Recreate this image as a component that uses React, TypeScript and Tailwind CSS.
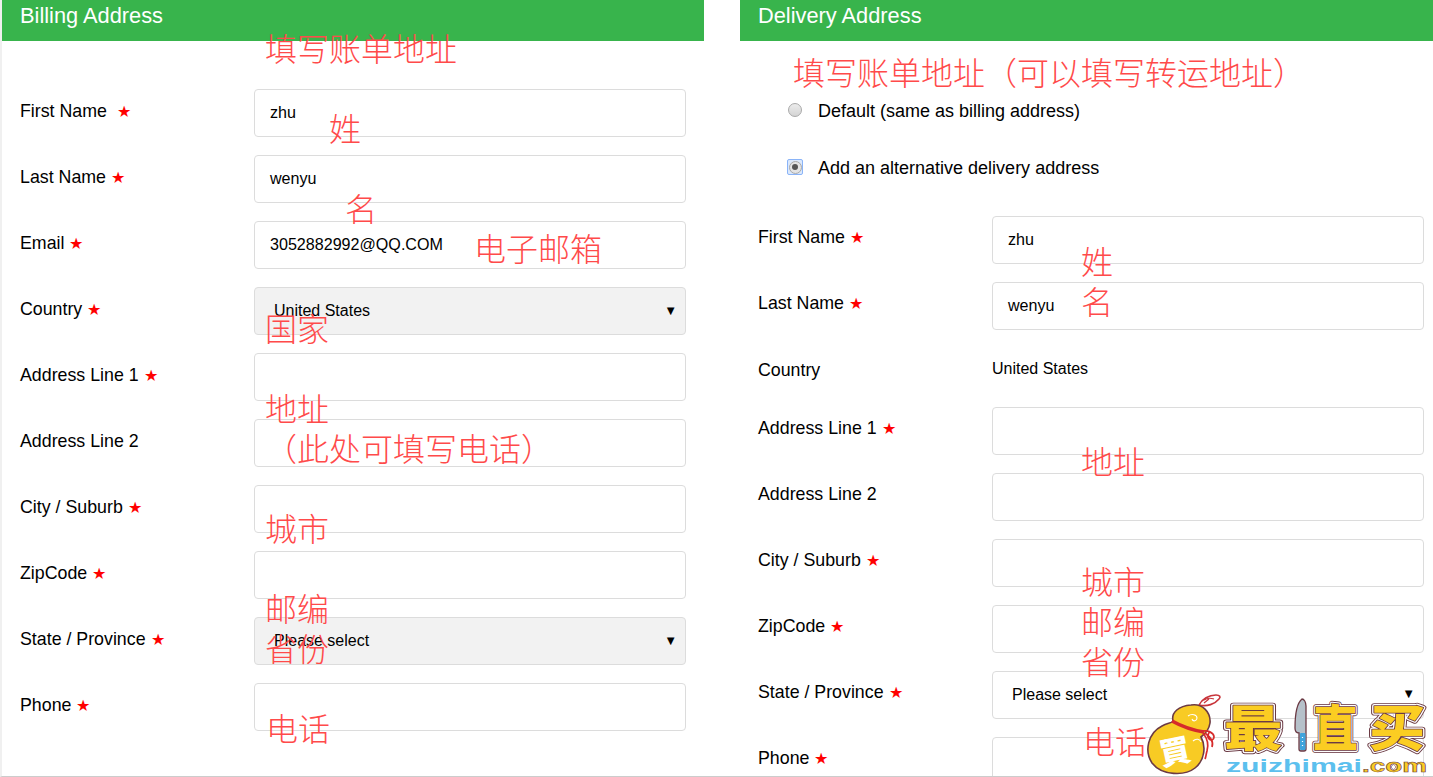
const sans = "font-['Liberation_Sans',Arial,sans-serif]";

function Star({ wide }: { wide?: boolean }) {
  return <span className={`${wide ? "ml-[10px]" : "ml-[5px]"} text-[16px] text-[#ff0000]`}>★</span>;
}

function Row({ label, star = true, gap, value = "", select, plain, white, up, rowClass = "mb-[18px] h-[48px]" }: { label: string; star?: boolean; gap?: boolean; value?: string; select?: boolean; plain?: boolean; white?: boolean; up?: boolean; rowClass?: string }) {
  return (
    <div className={`flex items-center ${rowClass}`}>
      <div className={`w-[252px] shrink-0 pl-[18px] text-[17.8px] leading-[24px] text-black ${up ? "pb-[6px]" : plain ? "pb-[2px]" : "pb-[4px]"}`}>
        {label}
        {star && <Star wide={gap} />}
      </div>
      {plain ? (
        <div className="pb-[4px] text-[16px] text-black">{value}</div>
      ) : select ? (
        <div className={`flex h-[48px] w-[432px] items-center justify-between rounded-[4px] border border-[#dcdcdc] pr-[8px] pl-[19px] text-[16px] text-black ${white ? "bg-white" : "bg-[#f2f2f2]"}`}>
          <span>{value}</span>
          <span className={`text-[13px] ${white ? "-translate-y-[1px]" : ""}`}>▼</span>
        </div>
      ) : (
        <div className="flex h-[48px] w-[432px] items-center rounded-[4px] border border-[#dcdcdc] bg-white pl-[15px] pb-[2px] text-[16.1px] text-black">{value}</div>
      )}
    </div>
  );
}

const notes: [string, string][] = [
  ["填写账单地址", "left-[263px] top-[28px]"],
  ["姓", "left-[327px] top-[108px]"],
  ["名", "left-[343px] top-[188px]"],
  ["电子邮箱", "left-[472px] top-[228px]"],
  ["国家", "left-[263px] top-[308px]"],
  ["地址", "left-[263px] top-[388px]"],
  ["（此处可填写电话）", "left-[263px] top-[428px]"],
  ["城市", "left-[263px] top-[508px]"],
  ["邮编", "left-[263px] top-[588px]"],
  ["省份", "left-[263px] top-[628px]"],
  ["电话", "left-[264px] top-[708px]"],
  ["填写账单地址（可以填写转运地址）", "left-[791px] top-[52px]"],
  ["姓", "left-[1079px] top-[241px]"],
  ["名", "left-[1079px] top-[281px]"],
  ["地址", "left-[1079px] top-[441px]"],
  ["城市", "left-[1079px] top-[561px]"],
  ["邮编", "left-[1079px] top-[601px]"],
  ["省份", "left-[1079px] top-[641px]"],
  ["电话", "left-[1081px] top-[721px]"],
];

function Logo() {
  const cjk = { fontFamily: "'Noto Sans CJK SC', sans-serif", fontWeight: 900, fontSize: 56 } as const;
  const Big = ({ x, sx, t }: { x: number; sx: number; t: string }) => (
    <g transform={`translate(${x} 55) scale(${sx} 0.88)`} style={cjk}>
      <text fill="#6b3a44" stroke="#6b3a44" strokeWidth="6.4" strokeLinejoin="round">{t}</text>
      <text fill="#fff" stroke="#fff" strokeWidth="4.4" strokeLinejoin="round">{t}</text>
      <text fill="#6b3a44" stroke="#6b3a44" strokeWidth="1.8" strokeLinejoin="round">{t}</text>
      <text fill="#fbcd22">{t}</text>
    </g>
  );
  return (
    <svg className="absolute left-[1142px] top-[691px]" width="289" height="85" viewBox="0 0 289 85">
      <path d="M55 14c3-6 10-10 17-10 4 0 5 2 3 4-4 5-12 8-20 6z" fill="#fff" stroke="#c8343a" strokeWidth="1.6" />
      <path d="M60 9c3-2 7-2 10-1M60 12l5-4" fill="none" stroke="#c8343a" strokeWidth="1.2" />
      <path d="M47 14C58 12 67 21 66 32 65 39 61 43 57 46 62 55 61 69 51 77 41 85 18 85 8 72 0 60 4 42 18 35 24 32 28 32 29 30 27 21 35 15 47 14Z" fill="#f8cb24" stroke="#6b3a44" strokeWidth="1.6" />
      <path d="M28 30c9 5 19 9 32 11" fill="none" stroke="#d62b2b" strokeWidth="3.6" />
      <path d="M59 40c5-1 11 2 11 6 0 3-3 4-5 2-2-2-1-5 1-8M59 42c4 5 6 11 4 18-1 3-1 6-2 8M61 42c5 4 9 8 7 14" fill="none" stroke="#d62b2b" strokeWidth="1.7" />
      <path d="M44 25c4-3 9-1 9 2 0 3-4 4-5 1M18 52c2-4 7-4 8-1 1 2-2 4-4 2M49 50c3-3 7-2 8 1" fill="none" stroke="#fff" strokeWidth="1.1" />
      <text transform="translate(18 75) rotate(-12)" fill="#fff" style={{ fontFamily: "'Noto Sans CJK TC', sans-serif", fontWeight: 900, fontSize: 31 }}>買</text>
      <Big x={80} sx={1.04} t="最" />
      <path d="M158 8C160 8 162 11 162 15L162 58C162 60 161 60 160 60L157 60C156 60 155 59 155 58L155 42C152 42 151 40 151 37 151 24 153 12 158 8Z" fill="#b6c1ca" stroke="#6b3a44" strokeWidth="1.3" />
      <rect x="156" y="42" width="5.5" height="17" rx="1" fill="#3ea4dd" />
      <path d="M158.5 46v1M158.5 50v1M158.5 54v1" stroke="#fff" strokeWidth="1.2" />
      <Big x={169} sx={0.8} t="直" />
      <Big x={225} sx={1} t="买" />
      <text x="82" y="81" textLength="136" lengthAdjust="spacingAndGlyphs" fill="#5cc0ee" style={{ fontFamily: "'Liberation Sans', sans-serif", fontWeight: 700, fontSize: 18 }}>zuizhimai</text>
      <text x="218" y="81" textLength="65" lengthAdjust="spacingAndGlyphs" fill="#fbcd22" stroke="#6b3a44" strokeWidth="0.5" style={{ fontFamily: "'Liberation Sans', sans-serif", fontWeight: 700, fontSize: 18 }}>.com</text>
      <path d="M249.5 73l2.5 3-2.5 3-2.5-3z" fill="#fff" stroke="#6b3a44" strokeWidth="0.6" />
    </svg>
  );
}

export default function App() {
  return (
    <div className={`relative h-[777px] w-[1433px] overflow-hidden border-b border-l-2 border-b-[#cccccc] border-l-[#f0f0f0] bg-white ${sans}`}>
      <div className="flex">
        <section className="w-[702px] shrink-0">
          <h2 className="mb-[48px] h-[41px] bg-[#38b44c] pl-[18px] pb-[7px] text-[21.8px] leading-[32px] text-white">Billing Address</h2>
          <Row label="First Name" value="zhu" gap />
          <Row label="Last Name" value="wenyu" />
          <Row label="Email" value="3052882992@QQ.COM" />
          <Row label="Country" value="United States" select />
          <Row label="Address Line 1" />
          <Row label="Address Line 2" star={false} />
          <Row label="City / Suburb" />
          <Row label="ZipCode" />
          <Row label="State / Province" value="Please select" select />
          <Row label="Phone" />
        </section>
        <section className="ml-[36px] w-[693px] shrink-0">
          <h2 className="mb-[57px] h-[41px] bg-[#38b44c] pl-[18px] pb-[7px] text-[21.8px] leading-[32px] text-white">Delivery Address</h2>
          <label className="flex h-[24px] items-center pl-[48px] text-[18px] leading-[24px] text-black">
            <span className="mr-[16px] h-[14px] w-[14px] rounded-full border border-[#a9a9a9] bg-gradient-to-b from-[#ececec] to-[#d4d4d4]" />
            <span className="pt-[2px]">Default (same as billing address)</span>
          </label>
          <label className="mt-[33px] mb-[37px] flex h-[24px] items-center pl-[47px] text-[18px] leading-[24px] text-black">
            <span className="mr-[15px] flex h-[16px] w-[16px] items-center justify-center rounded-[2px] border border-[#8ab4f8] bg-[#dbe8fb]">
              <span className="flex h-[13px] w-[13px] items-center justify-center rounded-full border border-[#a9a9a9] bg-[#e4e4e4]">
                <span className="h-[6px] w-[6px] rounded-full bg-[#555555]" />
              </span>
            </span>
            <span className="pt-[2px]">Add an alternative delivery address</span>
          </label>
          <Row up label="First Name" value="zhu" />
          <Row up label="Last Name" value="wenyu" />
          <Row label="Country" star={false} value="United States" plain rowClass="mb-[16px] h-[44px] -mt-[1px] pt-[4px]" />
          <Row up label="Address Line 1" />
          <Row up label="Address Line 2" star={false} />
          <Row up label="City / Suburb" />
          <Row up label="ZipCode" />
          <Row up label="State / Province" value="Please select" select white />
          <Row up label="Phone" />
        </section>
      </div>
      {notes.map(([t, pos]) => (
        <div key={t + pos} className={`absolute whitespace-nowrap font-['Noto_Sans_CJK_SC',sans-serif] text-[32px] leading-[38px] font-light text-[#ff4a4a] ${pos}`}>{t}</div>
      ))}
      <Logo />
    </div>
  );
}
